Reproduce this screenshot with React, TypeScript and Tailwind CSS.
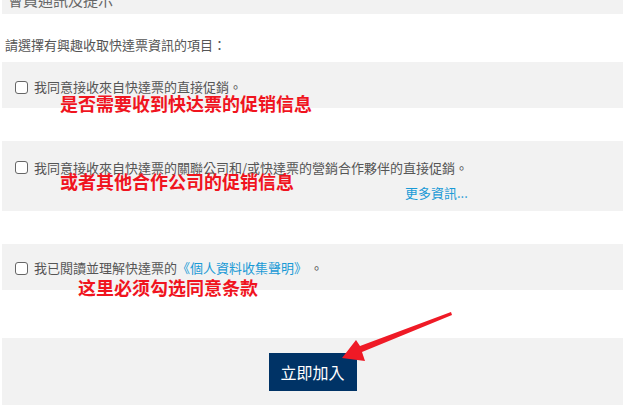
import React from 'react';

const tc = { fontFamily: '"Noto Sans CJK TC", "Noto Sans", sans-serif' };
const sc = { fontFamily: '"Noto Sans CJK SC", "Noto Sans", sans-serif' };

function Box({ className }: { className?: string }) {
  return <span className={`inline-block w-[13px] h-[13px] shrink-0 rounded-[3px] border border-[#666] bg-white ${className ?? ''}`} />;
}

function Note({ text, className }: { text: string; className: string }) {
  return (
    <div className={`absolute text-[18px] font-bold leading-none text-[#f0141e] whitespace-nowrap ${className}`} style={sc}>
      {text}
    </div>
  );
}

export default function App() {
  return (
    <div className="w-[623px] h-[405px] overflow-hidden bg-white pl-[2px] text-[#555] relative" style={tc}>
      {/* cut-off section header */}
      <div className="h-[14px] bg-[#f2f2f2] overflow-hidden relative">
        <div className="absolute left-[6px] top-[-10px] text-[15px] leading-[20px] text-[#666]">會員通訊及提示</div>
      </div>

      <div className="h-[48px] flex items-center pt-[14px] pl-[3px] text-[13px]">請選擇有興趣收取快達票資訊的項目：</div>

      {/* option 1 */}
      <div className="relative">
        <div className="h-[46px] bg-[#f2f2f2] flex items-center gap-[6px] pl-[13px] pt-[4px] text-[13px]">
          <Box />
          <span>我同意接收來自快達票的直接促銷。</span>
        </div>
        <Note text="是否需要收到快达票的促销信息" className="left-[58px] top-[32px]" />
      </div>

      {/* option 2 */}
      <div className="relative mt-[33px]">
        <div className="h-[70px] bg-[#f2f2f2] pl-[13px] pt-[17px] text-[13px]">
          <div className="flex items-center gap-[6px]">
            <Box />
            <span>我同意接收來自快達票的關聯公司和/或快達票的營銷合作夥伴的直接促銷。</span>
          </div>
          <div className="pl-[390px] mt-[5px] text-[#1a9ad6]">更多資訊...</div>
        </div>
        <Note text="或者其他合作公司的促销信息" className="left-[58px] top-[31px]" />
      </div>

      {/* option 3 */}
      <div className="relative mt-[33px]">
        <div className="h-[46px] bg-[#f2f2f2] flex items-center gap-[6px] pl-[13px] pt-[2px] text-[13px]">
          <Box />
          <span>
            我已閱讀並理解快達票的<span className="text-[#1a9ad6]">《個人資料收集聲明》</span> 。
          </span>
        </div>
        <Note text="这里必须勾选同意条款" className="left-[76px] top-[34px]" />
      </div>

      {/* submit */}
      <div className="mt-[48px] h-[67px] bg-[#f2f2f2] flex justify-center pt-[15px]">
        <button className="w-[88px] h-[38px] bg-[#003366] text-white text-[16px]" style={tc}>立即加入</button>
      </div>

      {/* arrow annotation */}
      <svg className="absolute left-0 top-0 pointer-events-none" width="623" height="405">
        <polygon points="451,312 360,346 356,340 342,358 365,361 362,352 452,315" fill="#ef1a26" />
      </svg>
    </div>
  );
}
